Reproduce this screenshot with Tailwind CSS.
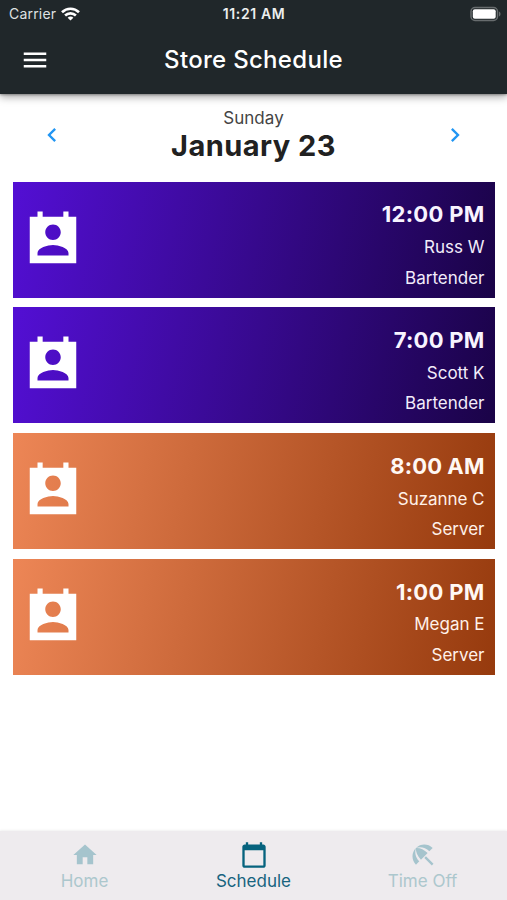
<!DOCTYPE html>
<html lang="en">
<head>
<meta charset="utf-8">
<title>Store Schedule</title>
<script src="https://cdn.jsdelivr.net/npm/@tailwindcss/browser@4"></script>
</head>
<body class="bg-white font-['Inter',sans-serif]">
<svg class="hidden">
  <symbol id="contact" viewBox="0 0 24 24"><path d="M21 3h-3V1h-2v2H8V1H6v2H3v18h18V3zm-9 3c1.66 0 3 1.34 3 3s-1.34 3-3 3-3-1.34-3-3 1.34-3 3-3zm6 12H6v-1c0-2 4-3.100 6-3.100s6 1.100 6 3.100v1z"/></symbol>
</svg>
<div class="flex h-[900px] w-[507px] flex-col overflow-hidden">
  <header class="relative h-[93.5px] shrink-0 bg-[#20272a] text-white shadow-[0_3px_8px_rgba(0,0,0,0.35),0_1px_2px_rgba(0,0,0,0.3)]">
    <div class="grid h-[27px] grid-cols-3 items-center pr-[6px] pl-[9px]">
      <div class="flex items-center gap-[5px] text-[14px] tracking-[0.2px] text-[#dfe1e2]">
        <span>Carrier</span>
        <svg class="h-[14px] w-[19px]" viewBox="0 0 19 14" fill="none" stroke="#fff" stroke-width="2.600"><path d="M1 5.200C5.800.5 13.200.5 18 5.200M4.100 8.500c3-2.900 7.800-2.900 10.800 0"/><path d="M9.500 13.600 6.600 10.700c1.600-1.500 4.200-1.500 5.800 0z" fill="#fff" stroke="none"/></svg>
      </div>
      <span class="-ml-[2px] text-center text-[14px] font-semibold tracking-[0.600px] text-[#eceeee]">11:21 AM</span>
      <svg class="h-4 w-[31px] justify-self-end" viewBox="0 0 31 16"><rect x="1" y="1.500" width="26.500" height="13" rx="4" fill="#20272a" stroke="#676c6e" stroke-width="1.500"/><rect x="2.800" y="3.300" width="22.900" height="9.400" rx="2" fill="#fff"/><path d="M29 5.500c2 .7 2 4.300 0 5z" fill="#676c6e"/></svg>
    </div>
    <div class="grid h-[65px] grid-cols-[80px_1fr_80px] items-center">
      <svg class="ml-5 size-[30px]" viewBox="0 0 24 24" fill="#fff"><path d="M3 18h18v-2H3v2zm0-5h18v-2H3v2zm0-7v2h18V6H3z"/></svg>
      <h1 class="text-center text-[24px] font-medium tracking-[0.3px]">Store Schedule</h1>
    </div>
  </header>
  <section class="flex h-[88px] shrink-0 items-start justify-between px-[38px] text-[#212121]">
    <svg class="mt-[27.500px] size-7" viewBox="0 0 24 24" fill="#2196f3"><path d="M15.410 7.410 14 6l-6 6 6 6 1.410-1.410L10.830 12z"/></svg>
    <div class="pt-[12px] text-center">
      <p class="text-[17px] leading-[24px] tracking-[0.05px] text-[#444]">Sunday</p>
      <h2 class="text-[29px] leading-[32px] font-bold tracking-[0.45px]">January 23</h2>
    </div>
    <svg class="mt-[27.500px] size-7" viewBox="0 0 24 24" fill="#2196f3"><path d="M10 6 8.590 7.410 13.170 12l-4.580 4.590L10 18l6-6z"/></svg>
  </section>
  <main class="flex grow flex-col gap-[9.900px] pr-[12.500px] pl-[13px] text-white">
    <article class="flex h-[116px] shrink-0 justify-between bg-linear-[102deg,#530fd4,#1a0347] pr-[10px] pl-[9.300px]">
      <svg class="mt-[27px] size-[62px]" fill="#fff"><use href="#contact"/></svg>
      <div class="pt-[17.500px] text-right text-[17px] leading-[30.800px] text-[#f2ecfa]">
        <p class="text-[22px] font-bold tracking-[0.300px] text-[#f8f4ff]">12:00 PM</p><p class="mt-[2px]">Russ W</p><p>Bartender</p>
      </div>
    </article>
    <article class="flex h-[116px] shrink-0 justify-between bg-linear-[102deg,#530fd4,#1a0347] pr-[10px] pl-[9.300px]">
      <svg class="mt-[27px] size-[62px]" fill="#fff"><use href="#contact"/></svg>
      <div class="pt-[17.500px] text-right text-[17px] leading-[30.800px] text-[#f2ecfa]">
        <p class="text-[22px] font-bold tracking-[0.250px] text-[#f8f4ff]">7:00 PM</p><p class="mt-[2px]">Scott K</p><p>Bartender</p>
      </div>
    </article>
    <article class="flex h-[116px] shrink-0 justify-between bg-linear-[102deg,#ed8656,#963a0d] pr-[10px] pl-[9.300px]">
      <svg class="mt-[27px] size-[62px]" fill="#fff"><use href="#contact"/></svg>
      <div class="pt-[17.500px] text-right text-[17px] leading-[30.800px] text-[#fff1e9]">
        <p class="text-[22px] font-bold tracking-[0.100px] text-[#fff8f4]">8:00 AM</p><p class="mt-[2px] tracking-[-0.05px]">Suzanne C</p><p>Server</p>
      </div>
    </article>
    <article class="flex h-[116px] shrink-0 justify-between bg-linear-[102deg,#ed8656,#963a0d] pr-[10px] pl-[9.300px]">
      <svg class="mt-[27px] size-[62px]" fill="#fff"><use href="#contact"/></svg>
      <div class="pt-[17.500px] text-right text-[17px] leading-[30.800px] text-[#fff1e9]">
        <p class="text-[22px] font-bold tracking-[0.300px] text-[#fff8f4]">1:00 PM</p><p class="mt-[2px]">Megan E</p><p>Server</p>
      </div>
    </article>
  </main>
  <nav class="grid h-[69px] shrink-0 grid-cols-3 bg-[#eeebee] text-[17px] leading-[24px] text-[#acc7cd] shadow-[0_-1px_2px_rgba(0,0,0,0.06)]">
    <a class="flex flex-col items-center pt-[10px]"><svg class="size-7" viewBox="0 0 24 24" fill="#a5c4cd"><path d="M10 20v-6h4v6h5v-8h3L12 3 2 12h3v8z"/></svg>Home</a>
    <a class="flex flex-col items-center pt-[10px] text-[#17647f]"><svg class="size-7" viewBox="0 0 24 24" fill="#06637e"><path d="M20 3h-1V1h-2v2H7V1H5v2H4c-1.100 0-2 .9-2 2v16c0 1.100.9 2 2 2h16c1.100 0 2-.9 2-2V5c0-1.100-.9-2-2-2zm0 18H4V8h16v13z"/></svg>Schedule</a>
    <a class="flex flex-col items-center pt-[10px]"><svg class="size-7" viewBox="0 0 24 24" fill="#a5c4cd"><path d="M13.127 14.560l1.430-1.430 6.440 6.443L19.570 21zm4.293-5.730l2.860-2.860c-3.950-3.950-10.350-3.960-14.300-.02 3.930-1.300 8.310-.25 11.440 2.880zM5.950 5.980c-3.940 3.950-3.930 10.350.02 14.300l2.860-2.860C5.700 14.290 4.650 9.910 5.950 5.980zm.02-.02l-.01.01c-.38 3.010 1.170 6.880 4.300 10.020l5.730-5.730c-3.130-3.130-7.010-4.680-10.020-4.300z"/></svg>Time Off</a>
  </nav>
</div>
</body>
</html>
